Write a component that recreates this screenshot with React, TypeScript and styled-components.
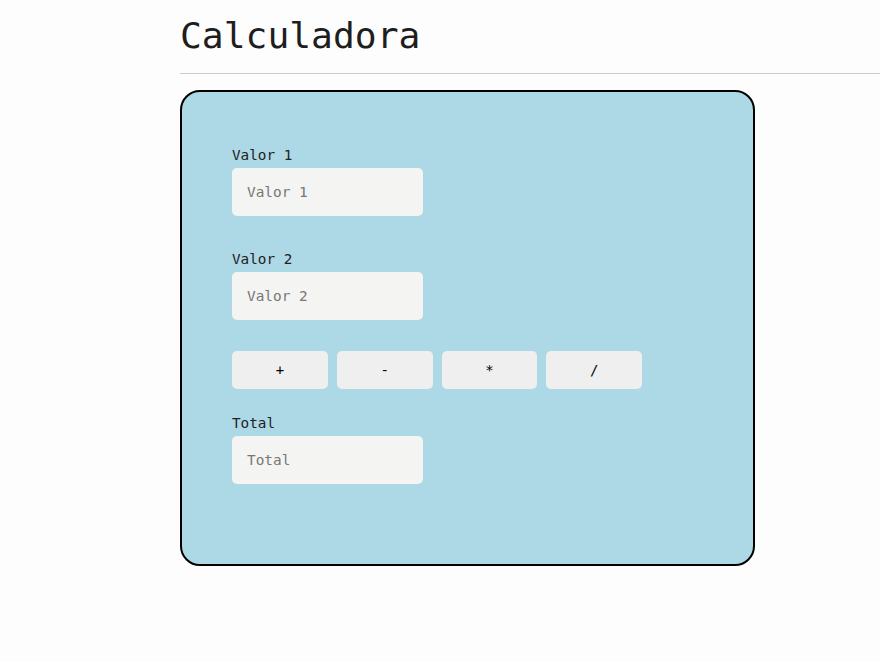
import styled, { createGlobalStyle } from "styled-components";

const GlobalStyle = createGlobalStyle`
  body {
    margin: 0;
    background: #fdfdfd;
    font-family: "DejaVu Sans Mono", monospace;
  }
`;

const Page = styled.main`
  padding-left: 180px;
`;

const Title = styled.h1`
  margin: 15px 0 0;
  font-family: "DejaVu Sans Mono", monospace;
  font-size: 36.3px;
  line-height: 42px;
  font-weight: 400;
  color: #1e1e1e;
`;

const Divider = styled.hr`
  margin: 16px 0 16px;
  border: none;
  border-top: 1px solid #cccccc;
`;

const Card = styled.section`
  box-sizing: border-box;
  width: 575px;
  height: 476px;
  padding: 55px 50px;
  background: #add8e6;
  border: 2px solid #000;
  border-radius: 20px;
  display: flex;
  flex-direction: column;
`;

const Field = styled.div<{ $gap: number }>`
  display: flex;
  flex-direction: column;
  gap: 5px;
  margin-bottom: ${(p) => p.$gap}px;
`;

const Label = styled.label`
  font-size: 14.3px;
  line-height: 16px;
  color: #222;
`;

const Input = styled.input`
  box-sizing: border-box;
  width: 191px;
  height: 48px;
  padding: 0 15px;
  border: none;
  border-radius: 5px;
  background: #f4f4f2;
  font-family: "DejaVu Sans Mono", monospace;
  font-size: 14.4px;
  color: #222;
  outline: none;

  &::placeholder {
    color: #777;
  }
`;

const Operators = styled.div`
  display: grid;
  grid-template-columns: repeat(4, 1fr);
  gap: 9px;
  width: 410px;
  margin-bottom: 26px;
`;

const OpButton = styled.button`
  height: 38px;
  border: none;
  border-radius: 5px;
  background: #efefef;
  font-family: "DejaVu Sans Mono", monospace;
  font-size: 14px;
  color: #000;
  cursor: pointer;
`;

export default function App() {
  return (
    <>
      <GlobalStyle />
      <Page>
        <Title>Calculadora</Title>
        <Divider />
        <Card>
          <Field $gap={35}>
            <Label htmlFor="v1">Valor 1</Label>
            <Input id="v1" placeholder="Valor 1" />
          </Field>
          <Field $gap={31}>
            <Label htmlFor="v2">Valor 2</Label>
            <Input id="v2" placeholder="Valor 2" />
          </Field>
          <Operators>
            {["+", "-", "*", "/"].map((op) => (
              <OpButton key={op}>{op}</OpButton>
            ))}
          </Operators>
          <Field $gap={0}>
            <Label htmlFor="total">Total</Label>
            <Input id="total" placeholder="Total" readOnly />
          </Field>
        </Card>
      </Page>
    </>
  );
}
